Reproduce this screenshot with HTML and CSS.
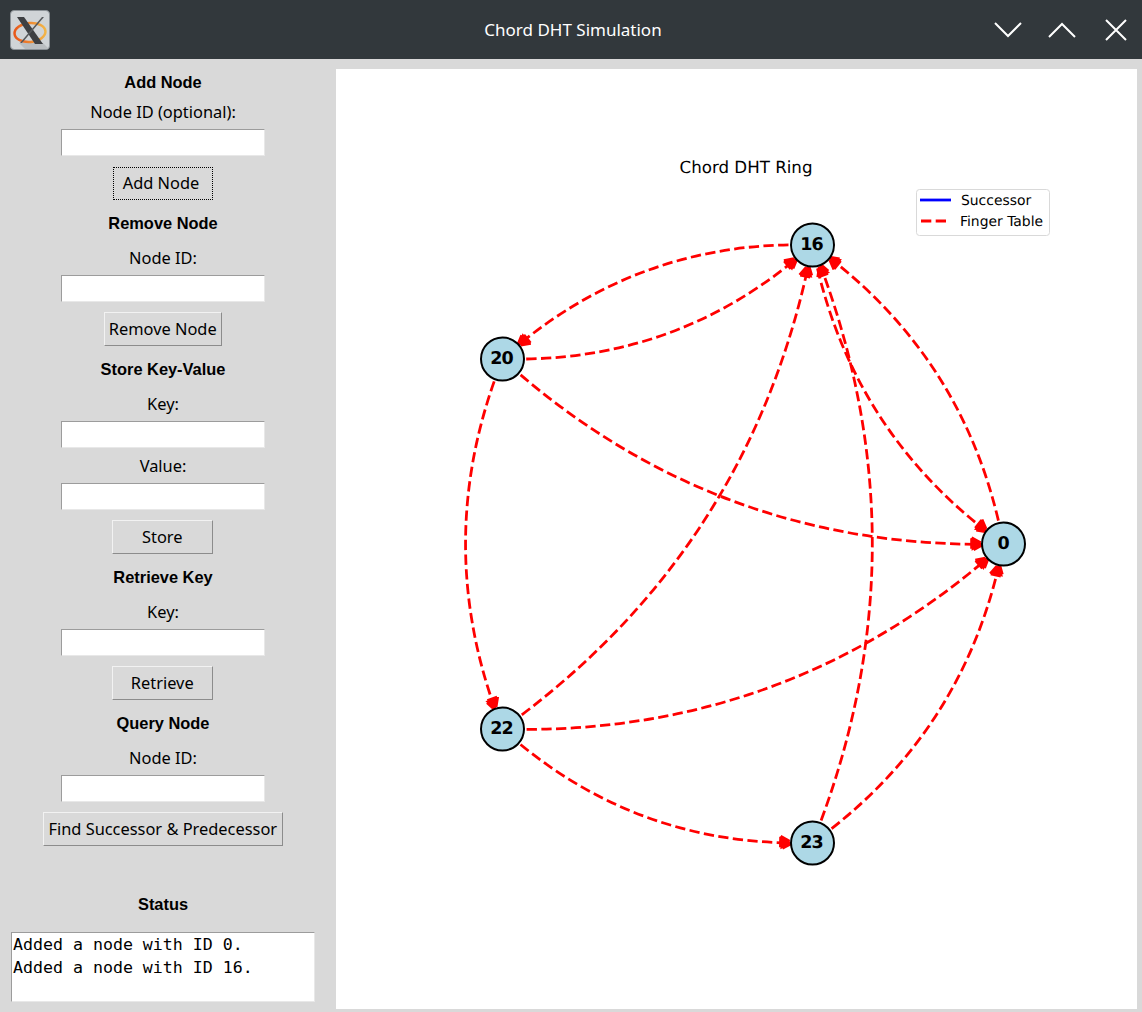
FILE: index.html
```html
<!DOCTYPE html>
<html lang="en">
<head>
    <meta charset="UTF-8">
    <meta name="viewport" content="width=device-width, initial-scale=1.0">
    <title>Chord DHT Simulation</title>
    <link rel="stylesheet" href="styles.css">
</head>
<body>
    <header class="titlebar">
        <div class="app-icon">
            <svg viewBox="0 0 40 40" width="40" height="40">
                <defs>
                    <linearGradient id="ring" x1="0" y1="0" x2="1" y2="0">
                        <stop offset="0" stop-color="#e8581a"></stop>
                        <stop offset="1" stop-color="#f2b548"></stop>
                    </linearGradient>
                </defs>
                <polygon class="x-shadow" points="9,33 33,33 40,40 16,40"></polygon>
                <ellipse class="x-ring" cx="20" cy="22.5" rx="15.5" ry="9.5" transform="rotate(-5 20 22.5)"></ellipse>
                <polygon class="x-stroke" points="7,7 14,7 33,34 25,34"></polygon>
                <polygon class="x-thin" points="32,7 34,7 12,33 10,33"></polygon>
            </svg>
        </div>
        <div class="window-title">Chord DHT Simulation</div>
        <div class="window-buttons">
            <svg viewBox="0 0 28 18" width="28" height="18"><path d="M1 2 L14 15 L27 2"></path></svg>
            <svg viewBox="0 0 28 18" width="28" height="18"><path d="M1 16 L14 3 L27 16"></path></svg>
            <svg viewBox="0 0 24 24" width="24" height="24"><path d="M2 2 L22 22 M22 2 L2 22"></path></svg>
        </div>
    </header>

    <div class="main">
        <aside class="sidebar">
            <section class="section first">
                <h2>Add Node</h2>
                <label>Node ID (optional):</label>
                <input type="text">
                <button class="focused">Add Node</button>
            </section>
            <section class="section">
                <h2>Remove Node</h2>
                <label>Node ID:</label>
                <input type="text">
                <button>Remove Node</button>
            </section>
            <section class="section">
                <h2>Store Key-Value</h2>
                <label>Key:</label>
                <input type="text">
                <label class="tight">Value:</label>
                <input type="text">
                <button class="short">Store</button>
            </section>
            <section class="section">
                <h2>Retrieve Key</h2>
                <label>Key:</label>
                <input type="text">
                <button class="short">Retrieve</button>
            </section>
            <section class="section">
                <h2>Query Node</h2>
                <label>Node ID:</label>
                <input type="text">
                <button>Find Successor &amp; Predecessor</button>
            </section>
            <section class="status">
                <h2>Status</h2>
                <div class="status-box">Added a node with ID 0.<br>Added a node with ID 16.</div>
            </section>
        </aside>

        <div class="canvas">
            <svg class="plot" viewBox="336 69 801 940" width="801" height="940">
                <defs>
                    <marker id="head" markerUnits="userSpaceOnUse" markerWidth="24" markerHeight="24" refX="11" refY="12" orient="auto">
                        <path d="M3 5.5 L15 12 L3 18.5 Z"></path>
                    </marker>
                </defs>

                <text class="plot-title" x="746" y="173">Chord DHT Ring</text>

                <g class="ring">
                    <!-- finger table edges -->
                    <path class="edge" d="M788 243.8 Q637.1 246.8 520 342.3"></path>
                    <path class="edge" d="M525.7 358 Q676.9 355.2 793.7 259.5"></path>
                    <path class="edge" d="M520.1 373.9 Q718.5 542.6 979.1 543.3"></path>
                    <path class="edge" d="M493.7 380.4 Q436.4 543 493.7 705.6"></path>
                    <path class="edge" d="M521.3 713.8 Q746.5 543.3 807.2 267.5"></path>
                    <path class="edge" d="M526.1 728.4 Q786.5 727.6 985.1 558.9"></path>
                    <path class="edge" d="M520 743.5 Q637.1 839.2 788 841.9"></path>
                    <path class="edge" d="M820.6 819.5 Q923 543 820.6 266.4"></path>
                    <path class="edge" d="M831.1 827.6 Q960.2 726.2 997.9 566.4"></path>
                    <path class="edge" d="M997.9 519.6 Q960.2 359.8 831.1 258.4"></path>
                    <path class="edge" d="M817 267.4 Q854.8 427.2 983.8 528.6"></path>

                    <g class="node">
                        <circle cx="812" cy="244" r="21.5"></circle>
                        <text x="811" y="249">16</text>
                    </g>
                    <g class="node">
                        <circle cx="502" cy="358" r="21.5"></circle>
                        <text x="501" y="363">20</text>
                    </g>
                    <g class="node">
                        <circle cx="502" cy="728" r="21.5"></circle>
                        <text x="501" y="733">22</text>
                    </g>
                    <g class="node">
                        <circle cx="812" cy="842" r="21.5"></circle>
                        <text x="811" y="847">23</text>
                    </g>
                    <g class="node">
                        <circle cx="1003" cy="543" r="21.5"></circle>
                        <text x="1002.5" y="548">0</text>
                    </g>
                </g>

                <rect class="legend-box" x="916.5" y="189.5" width="133" height="46" rx="3"></rect>
                <line class="legend-succ" x1="920" y1="200" x2="951" y2="200"></line>
                <line class="legend-finger" x1="921" y1="221" x2="947" y2="221"></line>
                <text class="legend-text" x="961" y="205">Successor</text>
                <text class="legend-text" x="960" y="226">Finger Table</text>
            </svg>
        </div>
    </div>
</body>
</html>
```

FILE: styles.css
```css
html, body {
    margin: 0;
    padding: 0;
}
body {
    width: 1142px;
    height: 1012px;
    overflow: hidden;
    background-color: #d9d9d9;
    font-family: "Noto Sans", sans-serif;
    font-size: 16.4px;
    color: #000;
}

/* window title bar */
.titlebar {
    height: 59px;
    display: grid;
    grid-template-columns: 1fr auto 1fr;
    align-items: center;
    background-color: #32383c;
}
.app-icon {
    width: 40px;
    height: 40px;
    margin-left: 10px;
    border-radius: 4px;
    border: 1px solid #8b9196;
    box-sizing: border-box;
    overflow: hidden;
    background-color: #d0d4d7;
}
.app-icon svg {
    display: block;
    margin: -1px;
}
.x-shadow {
    fill: #b9bdc0;
}
.x-ring {
    fill: none;
    stroke: url(#ring);
    stroke-width: 2.5;
}
.x-stroke {
    fill: #3d3f42;
}
.x-thin {
    fill: #55585b;
}
.window-title {
    margin-left: 4px;
    color: #fff;
    font-size: 17px;
}
.window-buttons {
    display: flex;
    align-items: center;
    justify-content: flex-end;
    gap: 26px;
    margin-right: 14px;
}
.window-buttons svg {
    display: block;
}
.window-buttons svg:nth-child(2) {
    margin-right: 2px;
}
.window-buttons path {
    fill: none;
    stroke: #fff;
    stroke-width: 2;
}

.main {
    display: flex;
    height: 953px;
}

/* left column with the forms */
.sidebar {
    width: 326px;
    margin-right: 10px;
    display: flex;
    flex-direction: column;
    align-items: center;
}
.section {
    display: flex;
    flex-direction: column;
    align-items: center;
    margin-top: 11px;
}
h2 {
    margin: 0;
    height: 24px;
    line-height: 24px;
    font-family: "Liberation Sans", Arial, sans-serif;
    font-size: 16.4px;
    font-weight: bold;
}
label {
    height: 24px;
    line-height: 24px;
    margin-top: 11px;
    margin-bottom: 5px;
}
label.tight {
    margin-top: 6px;
}
.first label {
    margin-top: 6px;
}
input {
    display: block;
    width: 204px;
    height: 27px;
    box-sizing: border-box;
    margin: 0;
    padding: 0 2px;
    background: #fff;
    border: 1px solid;
    border-color: #9c9c9c #e8e8e8 #e8e8e8 #9c9c9c;
    outline: none;
}
button {
    display: block;
    height: 34px;
    box-sizing: border-box;
    margin: 10px 0 0 0;
    padding: 0 4.5px 2px 4px;
    background-color: #d9d9d9;
    border: 1px solid;
    border-color: #f2f2f2 #8c8c8c #8c8c8c #f2f2f2;
    font-family: "Noto Sans", sans-serif;
    font-size: 16.4px;
    color: #000;
}
button.short {
    width: 101px;
    margin-right: 1px;
}
button.focused {
    height: 33px;
    margin: 11px 1px 0 0;
    width: 100px;
    padding-bottom: 3px;
    padding-right: 7px;
    border: 1px dotted #000;
}
.status {
    display: flex;
    flex-direction: column;
    align-items: center;
    margin-top: 46px;
}
.status-box {
    width: 304px;
    height: 70px;
    box-sizing: border-box;
    margin-top: 16px;
    padding: 0 1px;
    background: #fff;
    border: 1px solid;
    border-color: #9c9c9c #e8e8e8 #e8e8e8 #9c9c9c;
    font-family: "DejaVu Sans Mono", monospace;
    font-size: 16.6px;
    line-height: 23px;
    color: #000;
}

/* plot area */
.canvas {
    width: 801px;
    height: 940px;
    margin-top: 10px;
    background: #fff;
}
.plot {
    display: block;
    font-family: "DejaVu Sans", sans-serif;
    text-rendering: geometricPrecision;
}
.plot-title {
    font-size: 16.67px;
    text-anchor: middle;
}
.ring {
    transform: translate(0.5px, 1px);
}
.edge {
    fill: none;
    stroke: #f00;
    stroke-width: 2.78;
    stroke-dasharray: 10.3 4.4;
    marker-end: url(#head);
}
#head path {
    fill: #f00;
    stroke: #f00;
    stroke-width: 2.78;
    stroke-dasharray: 10.3 4.4;
}
.node circle {
    fill: #add8e6;
    stroke: #000;
    stroke-width: 2;
}
.node text {
    font-size: 17.5px;
    font-weight: bold;
    letter-spacing: -1px;
    text-anchor: middle;
}
.legend-box {
    fill: #fff;
    stroke: #d9d9d9;
    stroke-width: 1;
}
.legend-succ {
    stroke: #00f;
    stroke-width: 2.78;
}
.legend-finger {
    stroke: #f00;
    stroke-width: 2.78;
    stroke-dasharray: 10.3 4.4;
}
.legend-text {
    font-size: 13.9px;
}
```
